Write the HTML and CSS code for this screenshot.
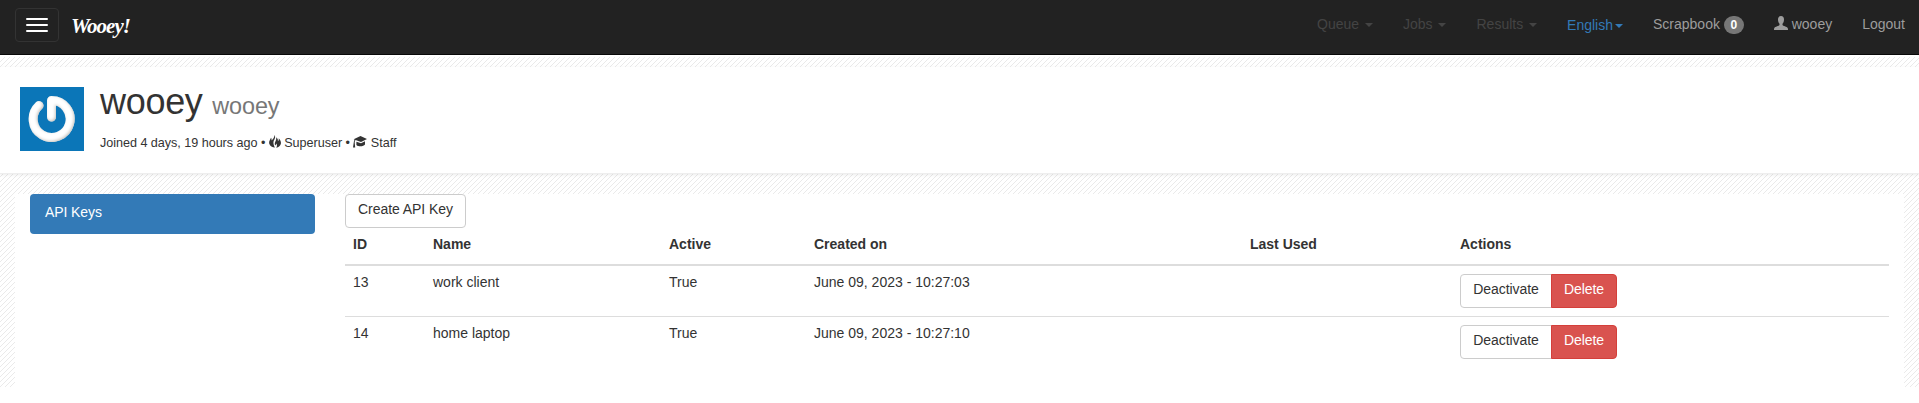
FILE: index.html
```html
<!DOCTYPE html>
<html lang="en">
<head>
<meta charset="utf-8">
<title>Wooey!</title>
<link rel="stylesheet" href="styles.css">
</head>
<body>
<nav class="navbar">
  <div class="navbar-left">
    <button class="toggle" aria-label="Menu"><span></span><span></span><span></span></button>
    <a class="brand">Wooey!</a>
  </div>
  <ul class="nav">
    <li class="disabled queue">Queue <i class="caret"></i></li>
    <li class="disabled jobs">Jobs <i class="caret"></i></li>
    <li class="disabled results">Results <i class="caret"></i></li>
    <li class="language">English<i class="caret"></i></li>
    <li class="scrapbook">Scrapbook <span class="badge">0</span></li>
    <li class="user"><svg class="user-icon" viewBox="0 0 14 14"><path d="M7 0C4.900 0 4 1.500 4 3.500C4 5.300 4.600 6.900 5.500 7.800V9C5.200 9.900 1 10.600.3 12.100C0 12.800 0 13.400 0 14H14C14 13.400 14 12.800 13.700 12.100C13 10.600 8.800 9.900 8.500 9V7.800C9.400 6.900 10 5.300 10 3.500C10 1.500 9.100 0 7 0Z"/></svg> wooey</li>
    <li class="logout">Logout</li>
  </ul>
</nav>
<div class="page">
  <header class="profile">
    <svg class="avatar" viewBox="0 0 64 64">
      <defs>
        <filter id="bevel" x="-20%" y="-20%" width="140%" height="140%">
          <feGaussianBlur in="SourceAlpha" stdDeviation="1.500" result="b"/>
          <feOffset in="b" dx="-1" dy="-1" result="o"/>
          <feComposite in="SourceGraphic" in2="o" operator="out" result="edge"/>
          <feFlood flood-color="#c4c0ba"/>
          <feComposite in2="edge" operator="in" result="shade"/>
          <feMerge><feMergeNode in="SourceGraphic"/><feMergeNode in="shade"/></feMerge>
        </filter>
      </defs>
      <rect width="64" height="64" fill="#0b76b8"/>
      <path d="M19 18.500A18.500 18.500 0 1 0 31.500 13.500V30" fill="none" stroke="#fff" stroke-width="9" stroke-linecap="round" stroke-linejoin="round" filter="url(#bevel)"/>
    </svg>
    <div class="profile-text">
      <h1>wooey <small>wooey</small></h1>
      <p>Joined 4 days, 19 hours ago •
        <svg class="fire" viewBox="0 0 12 13"><path d="M5.500 0C7.200 3 4.900 4.600 4.500 6.800C4.200 9 5 10.800 6 12.600C3.500 12.300.8 11 .2 8.400C-.2 6.200 1.200 4.800 2 2.800C2.700 3.700 2.600 4.700 2.400 5.600C3.900 4.200 5.500 2.500 5.500 0ZM7.200 2.200C8.600 3.500 9.200 4.600 8.800 6.300C9.700 5.700 10 4.700 9.700 3.200C11 4.500 12.200 6.300 11.900 8.500C11.600 10.900 9.700 12.200 7.200 12.800C8.300 11 8.100 9.700 7.300 8.500C7 9.500 6.700 10 6.200 10.400C4.600 7.200 7.800 6.100 7.200 2.200Z"/></svg>
        Superuser •
        <svg class="cap" viewBox="0 0 14 12"><path d="M7.500 0L14 2.900L8 6L2.600 4.100C2 4.700 1.700 5.400 1.700 6.400L2.200 11.500H0L.7 6.700C.8 5.400 1.100 4.500 1.700 3.800L.7 3.300ZM3.400 5.700L8 7.300L12 5.200V8.500C10.500 10.700 5.500 11 3.400 8.900Z"/></svg>
        Staff</p>
    </div>
  </header>
  <main class="content">
    <aside class="sidebar"><a class="list-item">API Keys</a></aside>
    <section class="keys">
      <button class="btn create">Create API Key</button>
      <table>
        <colgroup><col class="c-id"><col class="c-name"><col class="c-active"><col class="c-created"><col class="c-used"><col></colgroup>
        <thead><tr><th>ID</th><th>Name</th><th>Active</th><th>Created on</th><th>Last Used</th><th>Actions</th></tr></thead>
        <tbody>
          <tr><td>13</td><td>work client</td><td>True</td><td>June 09, 2023 - 10:27:03</td><td></td><td><div class="group"><button class="btn">Deactivate</button><button class="btn danger">Delete</button></div></td></tr>
          <tr><td>14</td><td>home laptop</td><td>True</td><td>June 09, 2023 - 10:27:10</td><td></td><td><div class="group"><button class="btn">Deactivate</button><button class="btn danger">Delete</button></div></td></tr>
        </tbody>
      </table>
    </section>
  </main>
</div>
</body>
</html>
```
FILE: styles.css
```css
* { box-sizing: border-box; }
body { margin: 0; background: #fff; color: #333; font: 14px/20px "Liberation Sans", Arial, sans-serif; overflow: hidden; }
button { font: inherit; }
.navbar { height: 55px; background: #222; border-bottom: 1px solid #080808; display: flex; justify-content: space-between; }
.navbar-left { display: flex; align-items: flex-start; padding: 8px 0 0 15px; }
.toggle { width: 44px; height: 34px; padding: 9px 10px; background: transparent; border: 1px solid #333; border-radius: 4px; display: flex; flex-direction: column; gap: 4px; }
.toggle span { height: 2px; width: 22px; background: #fff; border-radius: 1px; flex: none; }
.brand { margin: 4px 0 0 12px; color: #fff; font: italic bold 21px/28px "Liberation Serif", cursive; letter-spacing: -1px; }
.nav { list-style: none; display: flex; margin: 0; padding: 14px 14px 0 0; color: #9d9d9d; white-space: nowrap; }
.nav li { margin-left: 30px; }
.nav .disabled { color: #444; }
.nav .language { color: #337ab7; padding-top: 1px; }
.caret { display: inline-block; margin-left: 2px; vertical-align: middle; border-top: 4px solid; border-left: 4px solid transparent; border-right: 4px solid transparent; }
.badge { display: inline-block; min-width: 20px; padding: 3px 6px; font-size: 12px; line-height: 12px; font-weight: bold; text-align: center; color: #fff; background: #777; border-radius: 10px; vertical-align: middle; }
.user-icon { width: 14px; height: 14px; fill: #9d9d9d; vertical-align: -1px; }
.page { margin-top: 2px; height: 330px; padding-top: 10px; background: url("data:image/svg+xml,%3Csvg xmlns='http://www.w3.org/2000/svg' width='5' height='5' fill='%23eaeaea' shape-rendering='crispEdges'%3E%3Cpath d='M0 4h1v1H0zM1 3h1v1H1zM2 2h1v1H2zM3 1h1v1H3zM4 0h1v1H4z'/%3E%3C/svg%3E"); }
.profile { height: 107px; padding: 20px; background: #fff; border-bottom: 1px solid #eee; box-shadow: 0 1px 3px rgba(0,0,0,.08); display: flex; gap: 16px; }
.avatar { width: 64px; height: 64px; flex: none; }
.profile-text h1 { margin: -5px 0 0; font-size: 36px; line-height: 40px; font-weight: 500; letter-spacing: -.3px; }
.profile-text small { font-size: 23.4px; color: #777; font-weight: 400; letter-spacing: -.1px; }
.profile-text p { margin: 7px 0 0; font-size: 12.6px; line-height: 20px; letter-spacing: -.03px; }
.fire { width: 12px; height: 13px; fill: #333; vertical-align: -1px; }
.cap { width: 14px; height: 12px; fill: #333; vertical-align: -1px; }
.content { margin: 20px 15px 0; height: 193px; background: #fff; display: flex; padding: 0 15px; gap: 30px; }
.sidebar { width: 285px; flex: none; }
.list-item { display: block; height: 40px; padding: 8px 15px; background: #337ab7; color: #fff; border-radius: 4px; letter-spacing: -.1px; }
.keys { flex: 1; }
.btn { height: 34px; padding: 4px 0 8px; line-height: 20px; color: #333; background: #fff; border: 1px solid #ccc; border-radius: 4px; display: block; text-align: center; white-space: nowrap; letter-spacing: -.05px; }
.create { width: 121px; }
table { width: 100%; table-layout: fixed; border-collapse: separate; border-spacing: 0; }
th { height: 38px; padding: 6px 8px 10px; border-bottom: 2px solid #ddd; text-align: left; vertical-align: top; }
td { height: 50px; padding: 6px 8px 8px; vertical-align: top; }
tbody tr + tr td { height: 51px; border-top: 1px solid #ddd; }
.c-id { width: 80px; }
.c-name { width: 236px; }
.c-active { width: 145px; }
.c-created { width: 436px; }
.c-used { width: 210px; }
.group { display: flex; margin-top: 2px; }
.group .btn { width: 92px; }
.group .btn:first-child { border-radius: 4px 0 0 4px; }
.group .btn.danger { width: 66px; margin-left: -1px; border-radius: 0 4px 4px 0; color: #fff; background: #d9534f; border-color: #d43f3a; }
```
